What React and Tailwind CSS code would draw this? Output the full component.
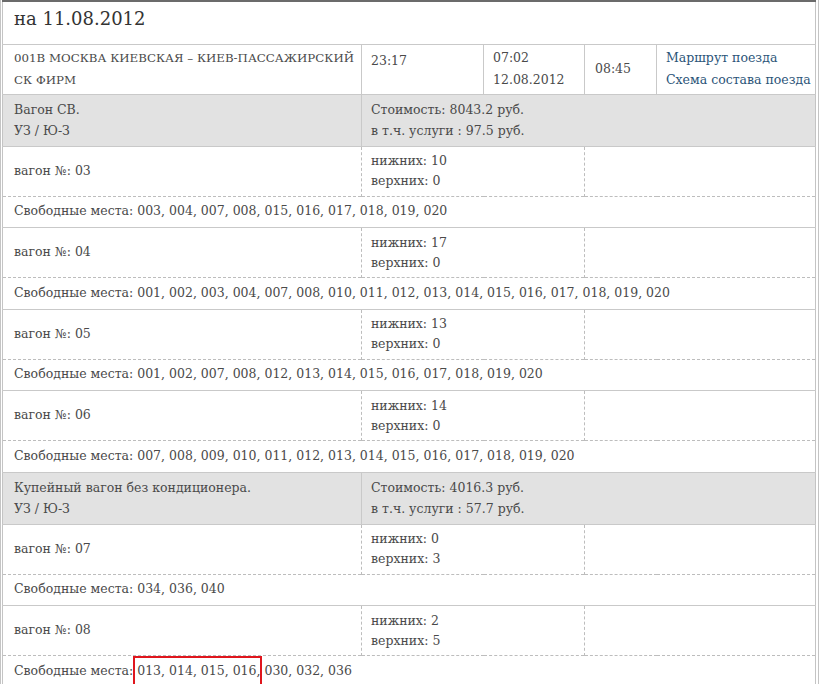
import React from 'react';

const wagons = [
  {
    type: 'Вагон СВ.',
    owner: 'УЗ / Ю-З',
    price: '8043.2',
    fee: '97.5',
    cars: [
      { no: '03', low: 10, up: 0, seats: '003, 004, 007, 008, 015, 016, 017, 018, 019, 020' },
      { no: '04', low: 17, up: 0, seats: '001, 002, 003, 004, 007, 008, 010, 011, 012, 013, 014, 015, 016, 017, 018, 019, 020' },
      { no: '05', low: 13, up: 0, seats: '001, 002, 007, 008, 012, 013, 014, 015, 016, 017, 018, 019, 020' },
      { no: '06', low: 14, up: 0, seats: '007, 008, 009, 010, 011, 012, 013, 014, 015, 016, 017, 018, 019, 020' }
    ]
  },
  {
    type: 'Купейный вагон без кондиционера.',
    owner: 'УЗ / Ю-З',
    price: '4016.3',
    fee: '57.7',
    cars: [
      { no: '07', low: 0, up: 3, seats: '034, 036, 040' },
      { no: '08', low: 2, up: 5, seats: null }
    ]
  }
];

const solid = 'border-t border-[#c9c9c9]';

const App = () => {
  return (
    <div
      className="w-[820px] h-[684px] overflow-hidden bg-white text-[12.5px] text-[#4a4a4a]"
      style={{ fontFamily: '"DejaVu Serif", "Liberation Serif", serif' }}
    >
      <div className="border-l border-r border-[#c4c4c4] px-[1px] mr-[1px]">
        <table className="w-[814px] border-collapse border-l border-r border-[#c4c4c4] table-fixed">
          <colgroup>
            <col className="w-[359px]" />
            <col className="w-[122px]" />
            <col className="w-[101px]" />
            <col className="w-[72px]" />
            <col />
          </colgroup>
          <tbody>
            {/* Title */}
            <tr className="h-[43px] border-t-2 border-[#6b6b6b]">
              <td colSpan={5} className="px-[11px] text-[18px] text-[#333] leading-none pb-[8px]">
                на 11.08.2012
              </td>
            </tr>

            {/* Train */}
            <tr className={`h-[50px] ${solid}`}>
              <td className="px-[11px] leading-[22px] align-middle text-[11.8px] whitespace-nowrap">
                001В МОСКВА КИЕВСКАЯ – КИЕВ-ПАССАЖИРСКИЙ
                <br />
                СК ФИРМ
              </td>
              <td className="border-l border-[#c9c9c9] px-[9px] align-top pt-[7px]">23:17</td>
              <td className="border-l border-[#c9c9c9] px-[9px] leading-[22px]">
                07:02
                <br />
                12.08.2012
              </td>
              <td className="border-l border-[#c9c9c9] px-[10px]">08:45</td>
              <td className="border-l border-[#c9c9c9] pl-[9px] pr-0 leading-[22px] text-[#2b5478] whitespace-nowrap">
                <a className="block">Маршрут поезда</a>
                <a className="block">Схема состава поезда</a>
              </td>
            </tr>

            {wagons.map((w) => (
              <React.Fragment key={w.type}>
                <tr className={`h-[52px] bg-[#e2e2e2] ${solid}`}>
                  <td className="px-[11px] leading-[21px]">
                    {w.type}
                    <br />
                    {w.owner}
                  </td>
                  <td colSpan={4} className="border-l border-[#c9c9c9] px-[9px] leading-[21px]">
                    Стоимость: {w.price} руб.
                    <br />
                    в т.ч. услуги : {w.fee} руб.
                  </td>
                </tr>
                {w.cars.map((c) => (
                  <React.Fragment key={c.no}>
                    <tr className={`h-[50px] ${solid}`}>
                      <td className="px-[11px]">вагон №: {c.no}</td>
                      <td colSpan={2} className="border-l border-dashed border-[#bdbdbd] px-[9px] leading-[20px]">
                        нижних: {c.low}
                        <br />
                        верхних: {c.up}
                      </td>
                      <td colSpan={2} className="border-l border-dashed border-[#bdbdbd]" />
                    </tr>
                    <tr className="h-[31.5px] border-t border-dashed border-[#bdbdbd]">
                      <td colSpan={5} className="px-[11px] whitespace-nowrap">
                        Свободные места:{' '}
                        {c.seats ? (
                          c.seats
                        ) : (
                          <>
                            <span className="relative">
                              013, 014, 015, 016,
                              <span className="absolute left-[-4px] right-[-2px] top-[-7px] h-[34px] border-2 border-[#e0161d]" />
                            </span>{' '}
                            030, 032, 036
                          </>
                        )}
                      </td>
                    </tr>
                  </React.Fragment>
                ))}
              </React.Fragment>
            ))}
          </tbody>
        </table>
      </div>
    </div>
  );
};

export default App;
